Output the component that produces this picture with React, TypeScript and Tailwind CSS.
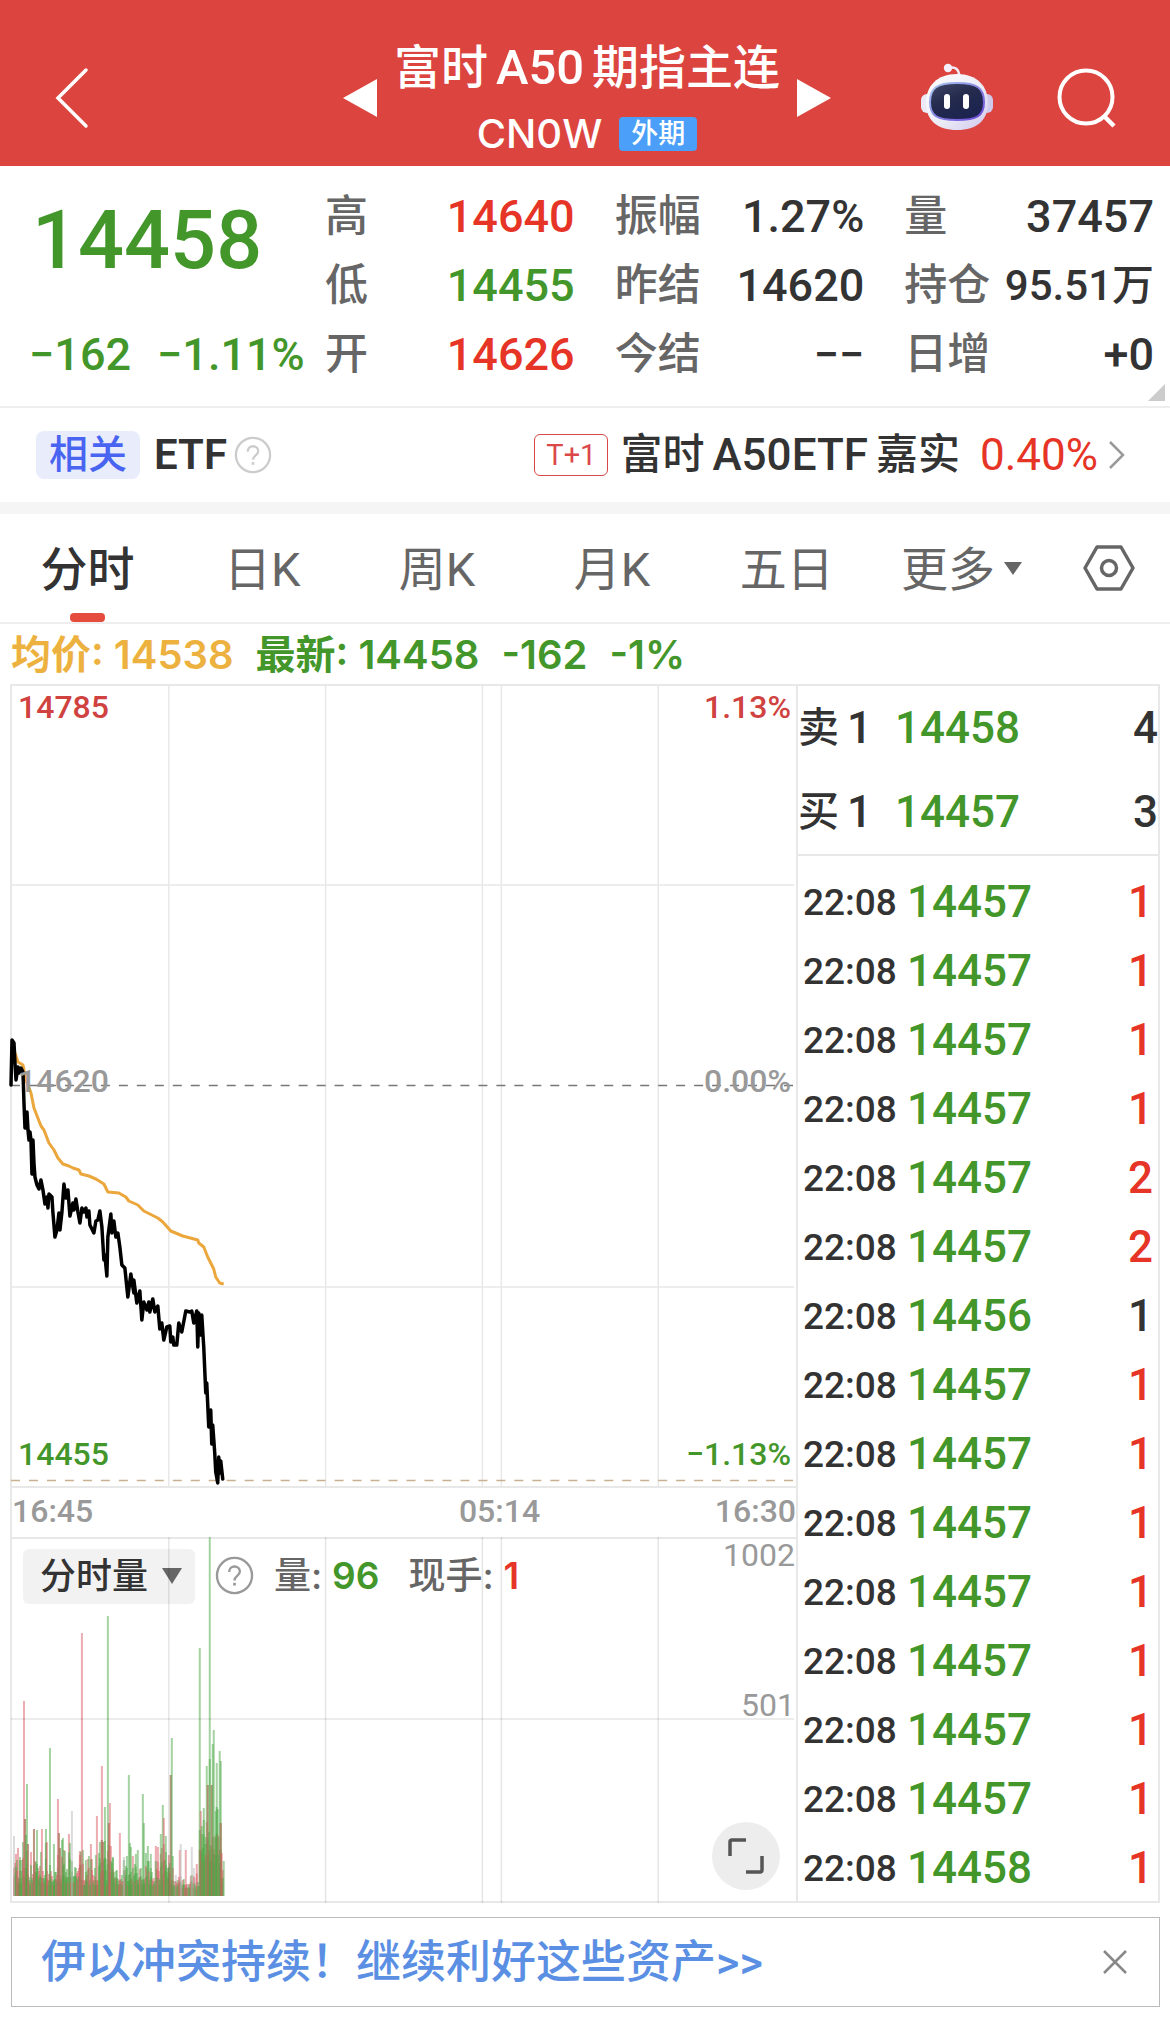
import React, { useState } from "react";
import clsx from "clsx";

type Stat = { label: string; value: string; tone?: "up" | "down"; small?: boolean };
type Tick = { time: string; price: string; qty: number; tone: "up" | "flat" };
type Spike = [x: number, height: number, kind: "r" | "g" | "b" | "n"];

const GREEN = "text-[#43962a]";
const RED = "text-[#e63426]";

const stats: Stat[] = [
  { label: "高", value: "14640", tone: "up" },
  { label: "振幅", value: "1.27%" },
  { label: "量", value: "37457" },
  { label: "低", value: "14455", tone: "down" },
  { label: "昨结", value: "14620" },
  { label: "持仓", value: "95.51万", small: true },
  { label: "开", value: "14626", tone: "up" },
  { label: "今结", value: "−−" },
  { label: "日增", value: "+0" },
];

const tabs = ["分时", "日K", "周K", "月K", "五日"];

const quotes = [
  { label: "卖", price: "14458", qty: 4 },
  { label: "买", price: "14457", qty: 3 },
];

const ticks: Tick[] = [
  { time: "22:08", price: "14457", qty: 1, tone: "up" },
  { time: "22:08", price: "14457", qty: 1, tone: "up" },
  { time: "22:08", price: "14457", qty: 1, tone: "up" },
  { time: "22:08", price: "14457", qty: 1, tone: "up" },
  { time: "22:08", price: "14457", qty: 2, tone: "up" },
  { time: "22:08", price: "14457", qty: 2, tone: "up" },
  { time: "22:08", price: "14456", qty: 1, tone: "flat" },
  { time: "22:08", price: "14457", qty: 1, tone: "up" },
  { time: "22:08", price: "14457", qty: 1, tone: "up" },
  { time: "22:08", price: "14457", qty: 1, tone: "up" },
  { time: "22:08", price: "14457", qty: 1, tone: "up" },
  { time: "22:08", price: "14457", qty: 1, tone: "up" },
  { time: "22:08", price: "14457", qty: 1, tone: "up" },
  { time: "22:08", price: "14457", qty: 1, tone: "up" },
  { time: "22:08", price: "14458", qty: 1, tone: "up" },
];

const priceLine =
  "0,401 1,356 3,359 4,379 5,396 7,383 8,389 10,384 12,388 13,419 14,444 16,428 17,446 18,456 19,448 20,456 21,490 22,456 23,479 24,493 26,501 28,505 30,496 32,506 34,520 36,513 37,524 38,510 41,513 42,529 44,553 46,546 48,529 49,546 51,528 53,500 55,514 57,506 59,532 62,519 63,526 65,515 67,528 69,539 71,524 73,528 75,524 76,533 78,527 79,541 83,549 85,537 87,536 89,527 91,543 93,576 94,571 96,592 97,553 100,530 101,549 103,537 105,553 107,549 109,563 111,581 114,584 117,613 120,590 123,609 123,596 126,619 129,607 131,636 133,618 136,626 138,618 139,628 142,615 144,628 147,622 149,645 151,639 153,656 156,643 159,642 160,658 162,653 163,661 166,661 168,639 171,648 175,627 179,628 181,627 183,639 186,627 187,663 188,629 190,651 191,631 193,663 195,709 196,699 198,743 200,726 201,760 202,741 204,769 205,788 207,799 208,773 209,789 210,777 212,795";

const averageLine =
  "3,366 7,378 12,381 15,396 20,409 23,424 30,442 33,446 38,459 43,466 47,474 52,480 58,482 62,484 68,486 70,490 78,492 85,495 93,500 97,508 108,509 115,513 118,517 127,521 133,527 147,534 152,538 160,547 172,552 187,556 188,559 193,563 197,573 203,585 205,593 209,599 213,600";

const spikes: Spike[] = [
  [3, 60, "n"], [7, 48, "r"], [9, 39, "g"], [13, 195, "r"], [14, 77, "b"], [15, 61, "g"], [16, 112, "g"],
  [17, 52, "b"], [23, 67, "b"], [26, 66, "g"], [30, 44, "g"], [31, 67, "r"], [35, 67, "g"], [36, 54, "r"],
  [39, 148, "g"], [43, 52, "g"], [47, 97, "r"], [48, 63, "b"], [49, 48, "b"], [52, 58, "g"], [54, 45, "g"],
  [61, 85, "n"], [69, 41, "r"], [71, 263, "r"], [75, 36, "g"], [85, 41, "g"], [86, 80, "r"], [91, 130, "r"],
  [91, 56, "b"], [92, 54, "b"], [94, 89, "g"], [97, 280, "g"], [98, 73, "b"], [99, 93, "r"], [102, 39, "g"],
  [109, 63, "r"], [113, 39, "n"], [118, 121, "g"], [119, 53, "g"], [120, 49, "g"], [127, 46, "g"],
  [132, 102, "g"], [133, 73, "g"], [140, 42, "g"], [150, 62, "g"], [152, 91, "g"], [153, 78, "r"],
  [155, 60, "g"], [160, 121, "b"], [161, 158, "g"], [169, 46, "r"], [170, 52, "n"], [175, 46, "r"],
  [181, 49, "n"], [189, 248, "g"], [190, 85, "r"], [191, 70, "g"], [193, 76, "g"], [196, 130, "g"],
  [197, 111, "b"], [199, 359, "g"], [199, 137, "g"], [201, 111, "b"], [202, 152, "g"], [203, 166, "g"],
  [205, 85, "g"], [206, 133, "g"], [209, 145, "g"], [210, 135, "g"], [210, 73, "b"], [211, 43, "r"],
  [213, 35, "g"],
];

const barColors = { r: "#dc5a64", g: "#4aa844", n: "#b8b8b8" };

// Small trades between the spikes, repeatable from one render to the next.
const smallBars = (() => {
  const bars: { x: number; h: number; fill: string }[] = [];
  let seed = 7;
  const next = () => {
    seed = (seed * 16807) % 2147483647;
    return seed / 2147483647;
  };
  for (let x = 3; x < 213; x += 1) {
    const busy = x >= 189 && x < 211;
    const quiet = x > 162 && x < 189;
    const base = busy ? 46 : quiet ? 10 : 15;
    const spread = busy ? 36 : quiet ? 20 : 34;
    const pick = next();
    const fill = quiet
      ? pick < 0.4 ? barColors.r : pick < 0.7 ? barColors.n : barColors.g
      : pick < 0.42 ? barColors.r : barColors.g;
    bars.push({ x, h: Math.round(base + spread * next() * next() * 1.4), fill });
  }
  return bars;
})();

const gridX = [158, 315, 472, 491, 648];

const HelpIcon = ({ className }: { className?: string }) => (
  <svg viewBox="0 0 40 40" className={className} fill="none" stroke="currentColor" strokeWidth="2.4">
    <circle cx="20" cy="20" r="18" />
    <path d="M14.5 16.5c0-3.600 2.400-5.700 5.500-5.700s5.500 2.100 5.500 5.200c0 4.300-5.500 4.600-5.500 9" />
    <path d="M20 27.500v2.800" strokeWidth="2.800" />
  </svg>
);

const Robot = () => (
  <svg viewBox="0 0 72 68" className="h-[68px] w-[72px]">
    <defs>
      <linearGradient id="shell" x1="0" y1="0" x2="1" y2="1">
        <stop offset="0" stopColor="#ffffff" />
        <stop offset="0.55" stopColor="#ececf6" />
        <stop offset="1" stopColor="#cfc6ee" />
      </linearGradient>
      <linearGradient id="visor" x1="0" y1="0" x2="0.600" y2="1">
        <stop offset="0" stopColor="#3f4666" />
        <stop offset="0.5" stopColor="#242b4d" />
        <stop offset="1" stopColor="#1c2350" />
      </linearGradient>
      <linearGradient id="rim" x1="0" y1="0" x2="1" y2="1">
        <stop offset="0" stopColor="#a9c8ee" />
        <stop offset="1" stopColor="#6a45d8" />
      </linearGradient>
    </defs>
    <path d="M28 5c6-2 10 1 10.500 9" fill="none" stroke="#f1ecf8" strokeWidth="2.500" />
    <circle cx="27" cy="5" r="4.200" fill="#f4effa" />
    <rect x="0" y="31" width="12" height="19" rx="6" fill="#eceaf7" />
    <rect x="60" y="31" width="12" height="19" rx="6" fill="#cfc9ec" />
    <path d="M36 11c20 0 31 12 31 29S56 67 36 67 5 57 5 40s11-29 31-29z" fill="url(#shell)" />
    <path
      d="M36 20c20 0 27 5 27 19s-7 18-27 18S9 53 9 39s7-19 27-19z"
      fill="url(#visor)"
      stroke="url(#rim)"
      strokeWidth="2"
    />
    <rect x="23" y="31" width="6" height="15" rx="3" fill="#fff" />
    <rect x="42" y="31" width="6" height="15" rx="3" fill="#fff" />
  </svg>
);

const Header: React.FC = () => (
  <header className="flex h-[166px] items-center bg-[#dc443f] text-white">
    <button aria-label="返回" className="ml-[53px] flex w-[36px] justify-start pt-[30px]">
      <svg viewBox="0 0 36 62" className="h-[62px] w-[36px]" fill="none" stroke="currentColor" strokeWidth="3.500">
        <path d="M33 3 5 31l28 28" strokeLinecap="round" />
      </svg>
    </button>
    <div className="flex flex-1 items-center justify-center gap-[17px] pl-[164px]">
      <button aria-label="上一个" className="pt-[30px]">
        <svg viewBox="0 0 34 38" className="h-[38px] w-[34px]" fill="currentColor">
          <path d="M34 0v38L0 19z" />
        </svg>
      </button>
      <div className="flex flex-col items-center pt-[36px]">
        <h1 className="flex gap-[8px] text-[47px] leading-[66px] font-medium whitespace-nowrap">
          <span>富时</span>
          <span className="text-[49px]">A50</span>
          <span>期指主连</span>
        </h1>
        <div className="flex items-center gap-[17px]">
          <span className="font-['Inter',sans-serif] text-[40px] leading-[66px] font-medium">CN0W</span>
          <span className="rounded-[4px] bg-[#4b9ff8] px-3 text-[27px] leading-[34px] font-medium">外期</span>
        </div>
      </div>
      <button aria-label="下一个" className="pt-[30px]">
        <svg viewBox="0 0 34 38" className="h-[38px] w-[34px]" fill="currentColor">
          <path d="M0 0v38l34-19z" />
        </svg>
      </button>
    </div>
    <button aria-label="智能助手" className="mr-[64px] pt-[28px]">
      <Robot />
    </button>
    <button aria-label="搜索" className="mr-[53px] pt-[30px]">
      <svg viewBox="0 0 60 60" className="size-[60px]" fill="none" stroke="currentColor" strokeWidth="4">
        <circle cx="29" cy="29" r="26.500" />
        <path d="m47 48 10 10" strokeWidth="4.500" />
      </svg>
    </button>
  </header>
);

const Summary: React.FC = () => (
  <section className="relative flex border-b-2 border-[#eeeeee] pt-[16px] pr-[16px] pb-[17px]">
    <div className={clsx("flex w-[325px] flex-col justify-between pl-[29px] font-medium", GREEN)}>
      <div className="pl-[3px] text-[81px] leading-[118px]">14458</div>
      <div className="flex gap-[26px] text-[45px] leading-[69px] whitespace-nowrap">
        <span>−162</span>
        <span>−1.11%</span>
      </div>
    </div>
    <dl className="grid flex-1 grid-cols-3 gap-x-[40px]">
      {stats.map((s) => (
        <div key={s.label} className="flex h-[69px] items-center justify-between whitespace-nowrap">
          <dt className="text-[43px] leading-[69px] font-medium text-[#666666]">{s.label}</dt>
          <dd
            className={clsx(
              "leading-[69px] font-medium",
              s.small ? "text-[42px]" : "text-[45px]",
              s.tone === "up" ? RED : s.tone === "down" ? GREEN : "text-[#333333]"
            )}
          >
            {s.value}
          </dd>
        </div>
      ))}
    </dl>
    <svg viewBox="0 0 17 17" className="absolute right-[5px] bottom-[5px] size-[17px]" fill="#cccccc">
      <path d="M17 0v17H0z" />
    </svg>
  </section>
);

const Related: React.FC = () => (
  <section className="flex h-[106px] items-center justify-between border-b-12 border-[#f5f5f5] pr-[44px] pl-[36px] whitespace-nowrap">
    <div className="flex items-center">
      <span className="rounded-[8px] bg-[#e9edfb] px-[13px] text-[39px] leading-[48px] font-medium text-[#4864f0]">
        相关
      </span>
      <span className="ml-[14px] text-[42px] leading-[48px] font-semibold text-[#333333]">ETF</span>
      <button aria-label="说明" className="ml-[7px] text-[#cccccc]">
        <HelpIcon className="size-[38px]" />
      </button>
    </div>
    <a href="#etf" className="flex items-center text-[42px] leading-[48px] font-medium text-[#333333]">
      <span className="mr-[12px] rounded-[6px] border border-[#d8474a] px-[11px] text-[29px] leading-[40px] font-normal text-[#dc474a]">
        T+1
      </span>
      <span className="flex gap-[8px]">
        <span>富时</span>
        <span className="text-[44px]">A50ETF</span>
        <span>嘉实</span>
      </span>
      <span className="ml-[20px] text-[44px] font-normal text-[#e63426]">0.40%</span>
      <svg viewBox="0 0 18 28" className="ml-[10px] h-[28px] w-[18px]" fill="none" stroke="#999" strokeWidth="2.500">
        <path d="m2 1 13 13L2 27" />
      </svg>
    </a>
  </section>
);

const Tabs: React.FC = () => {
  const [active, setActive] = useState("分时");

  return (
    <nav className="flex h-[110px] border-b-2 border-[#eeeeee] text-[47px] text-[#666666]">
      {tabs.map((tab) => (
        <button
          key={tab}
          onClick={() => setActive(tab)}
          className={clsx(
            "flex flex-1 flex-col items-center justify-between pt-[23px]",
            active === tab && "font-medium text-[#333333]"
          )}
        >
          <span className="leading-[66px]">{tab}</span>
          {active === tab && <span className="h-[9px] w-[35px] rounded-[4px] bg-[#e54c3d]" />}
        </button>
      ))}
      <button className="flex flex-1 items-start justify-center gap-[9px] pt-[23px]">
        <span className="leading-[66px]">更多</span>
        <svg viewBox="0 0 18 13" className="mt-[25px] h-[13px] w-[18px]" fill="#666">
          <path d="M0 0h18L9 13z" />
        </svg>
      </button>
      <button aria-label="设置" className="flex w-[121px] items-center justify-center">
        <svg viewBox="0 0 52 46" className="h-[46px] w-[52px]" fill="none" stroke="#666" strokeWidth="3.500">
          <path d="M14 2h24l12 21-12 21H14L2 23z" strokeLinejoin="round" />
          <circle cx="26" cy="23" r="7.500" />
        </svg>
      </button>
    </nav>
  );
};

const PriceChart: React.FC = () => (
  <div className="relative h-[804px] border-t-2 border-b-2 border-[#e8e8e8]">
    <svg
      viewBox="0 0 786 804"
      preserveAspectRatio="none"
      className="absolute -top-[2px] -left-[1px] h-[804px] w-[calc(100%+1px)] overflow-visible"
      fill="none"
    >
      <g stroke="#e8e8e8" strokeWidth="1.500">
        {gridX.map((x) => (
          <path key={x} d={`M${x} 0V804`} />
        ))}
        <path d="M0 201H784M0 603H784" />
      </g>
      <path d="M0 401.500H784" stroke="#777" strokeWidth="1.500" strokeDasharray="9 9" />
      <path d="M0 796.500H784" stroke="#c8b090" strokeWidth="1.500" strokeDasharray="9 9" />
      <polyline points={averageLine} stroke="#eba63c" strokeWidth="3" strokeLinejoin="round" />
      <polyline points={priceLine} stroke="#000" strokeWidth="3.500" strokeLinejoin="round" strokeLinecap="round" />
    </svg>
    <div className="relative flex h-full flex-col justify-between pt-[5px] pr-[5px] pb-[16px] pl-[6px] text-[32px] leading-[32px] font-medium">
      <div className="flex justify-between text-[#d0423f]">
        <span>14785</span>
        <span>1.13%</span>
      </div>
      <div className="flex justify-between text-[#999999]">
        <span>14620</span>
        <span>0.00%</span>
      </div>
      <div className={clsx("flex justify-between", GREEN)}>
        <span>14455</span>
        <span>−1.13%</span>
      </div>
    </div>
  </div>
);

const VolumeChart: React.FC = () => (
  <div className="relative h-[366px] border-t-2 border-b-2 border-[#e8e8e8]">
    <svg
      viewBox="0 0 786 366"
      preserveAspectRatio="none"
      className="absolute -top-[2px] -left-[1px] h-[366px] w-[calc(100%+1px)]"
      fill="none"
    >
      <g fillOpacity="0.500">
        {smallBars.map((b) => (
          <rect key={b.x} x={b.x - 1} y={359 - b.h} width="2" height={b.h} fill={b.fill} />
        ))}
        {smallBars.map((b, i) => (
          <rect
            key={b.x}
            x={b.x - 1}
            y={359 - b.h * 0.7}
            width="2"
            height={b.h * 0.7}
            fill={i % 3 === 0 ? barColors.r : barColors.g}
          />
        ))}
        {spikes.map(([x, h, kind], i) =>
          kind === "b" ? (
            <g key={i}>
              <rect x={x - 1} y={359 - h} width="2" height={h} fill={barColors.g} />
              <rect x={x - 1} y={359 - h} width="2" height={h} fill={barColors.r} />
            </g>
          ) : (
            <rect key={i} x={x - 1} y={359 - h} width="2" height={h} fill={barColors[kind]} />
          )
        )}
      </g>
    </svg>
    <div className="relative flex items-start pt-[10px] pl-[11px] text-[36px] leading-[53px] font-medium whitespace-nowrap">
      <div className="relative rounded-[6px] bg-[#f2f2f2] text-[#333333]">
        <select
          aria-label="指标"
          className="h-[53px] w-[172px] appearance-none bg-transparent pt-[3px] pl-[17px] leading-[50px] outline-none"
        >
          <option>分时量</option>
        </select>
        <svg
          viewBox="0 0 20 16"
          className="pointer-events-none absolute top-[19px] right-[13px] h-[16px] w-[20px]"
          fill="#666"
        >
          <path d="M0 0h20L10 16z" />
        </svg>
      </div>
      <button aria-label="说明" className="mt-[7px] ml-[20px] text-[#999999]">
        <HelpIcon className="size-[39px]" />
      </button>
      <span className="ml-[20px] font-['Inter','Noto_Sans_CJK_SC',sans-serif] text-[37px] text-[#666666]">
        量: <b className={clsx("font-semibold", GREEN)}>96</b>
      </span>
      <span className="ml-[29px] font-['Inter','Noto_Sans_CJK_SC',sans-serif] text-[37px] text-[#666666]">
        现手: <b className={clsx("font-semibold", RED)}>1</b>
      </span>
    </div>
    {/* Axis labels and the grid lie over the bars */}
    <svg
      viewBox="0 0 786 366"
      preserveAspectRatio="none"
      className="pointer-events-none absolute -top-[2px] -left-[1px] h-[366px] w-[calc(100%+1px)]"
      fill="none"
      stroke="#000"
      strokeOpacity="0.1"
      strokeWidth="1.500"
    >
      {gridX.map((x) => (
        <path key={x} d={`M${x} 0V366`} />
      ))}
      <path d="M0 182H784" />
    </svg>
    <span className="absolute top-0 right-[1px] text-[32px] leading-[32px] text-[#999999]">1002</span>
    <span className="absolute top-[150px] right-[1px] text-[32px] leading-[32px] text-[#999999]">501</span>
    <button
      aria-label="全屏"
      className="absolute right-[16px] bottom-[11px] flex size-[68px] items-center justify-center rounded-full bg-[#ededed]"
    >
      <svg viewBox="0 0 36 36" className="size-[36px]" fill="none" stroke="#555" strokeWidth="3.500">
        <path d="M2 18V4q0-2 2-2h14M34 18v14q0 2-2 2H18" />
      </svg>
    </button>
  </div>
);

const OrderPanel: React.FC = () => (
  <aside className="flex w-[364px] shrink-0 flex-col border-2 border-[#e8e8e8] font-medium text-[#333333]">
    <table className="w-full border-b-2 border-[#e8e8e8]">
      <tbody>
        {quotes.map((q) => (
          <tr key={q.label} className="h-[84px] text-[44px] leading-[84px]">
            <th className="w-[97px] text-left font-medium whitespace-nowrap">
              <span className="flex gap-[8px]">
                <span className="text-[41px]">{q.label}</span>
                <span>1</span>
              </span>
            </th>
            <td className={GREEN}>{q.price}</td>
            <td className="text-right">{q.qty}</td>
          </tr>
        ))}
      </tbody>
    </table>
    <table className="mt-[12px] -mb-[2px] w-full">
      <tbody>
        {ticks.map((t, i) => (
          <tr key={i} className="h-[69px] leading-[69px]">
            <td className="w-[109px] pl-[5px] text-[37px]">{t.time}</td>
            <td className={clsx("text-[44px]", GREEN)}>{t.price}</td>
            <td className={clsx("pr-[5px] text-right text-[44px]", t.tone === "up" && RED)}>{t.qty}</td>
          </tr>
        ))}
      </tbody>
    </table>
  </aside>
);

const App: React.FC = () => {
  const [noticeOpen, setNoticeOpen] = useState(true);

  return (
    <main className="min-h-screen bg-white pb-[32px] font-['Roboto','Noto_Sans_CJK_SC',sans-serif]">
      <Header />
      <Summary />
      <Related />
      <Tabs />

      <div className="flex h-[60px] gap-[22px] pl-[11px] font-['Inter','Noto_Sans_CJK_SC',sans-serif] text-[40px] leading-[61px] font-semibold whitespace-nowrap text-[#43962a]">
        <span className="text-[#edb13f]">均价: 14538</span>
        <span>最新: 14458</span>
        <span>-162</span>
        <span>-1%</span>
      </div>

      <div className="flex px-[10px]">
        <div className="min-w-0 flex-1 border-l-2 border-[#e8e8e8]">
          <PriceChart />
          <div className="relative flex h-[49px] items-center justify-between pb-[3px] text-[32px] font-medium text-[#999999]">
            <span>16:45</span>
            <span className="absolute left-[57%]">05:14</span>
            <span>16:30</span>
          </div>
          <VolumeChart />
        </div>
        <OrderPanel />
      </div>

      {noticeOpen && (
        <div className="mr-[10px] ml-[11px] mt-[14px] flex h-[90px] items-center justify-between border border-[#bbbbbb] pr-[32px] pl-[29px]">
          <a href="#news" className="pt-[2px] text-[45px] leading-[66px] font-medium whitespace-nowrap text-[#5a8fe3]">
            伊以冲突持续！继续利好这些资产&gt;&gt;
          </a>
          <button aria-label="关闭" onClick={() => setNoticeOpen(false)}>
            <svg viewBox="0 0 24 24" className="size-[24px]" fill="none" stroke="#888" strokeWidth="2.500">
              <path d="m1 1 22 22M23 1 1 23" />
            </svg>
          </button>
        </div>
      )}
    </main>
  );
};

export default App;
